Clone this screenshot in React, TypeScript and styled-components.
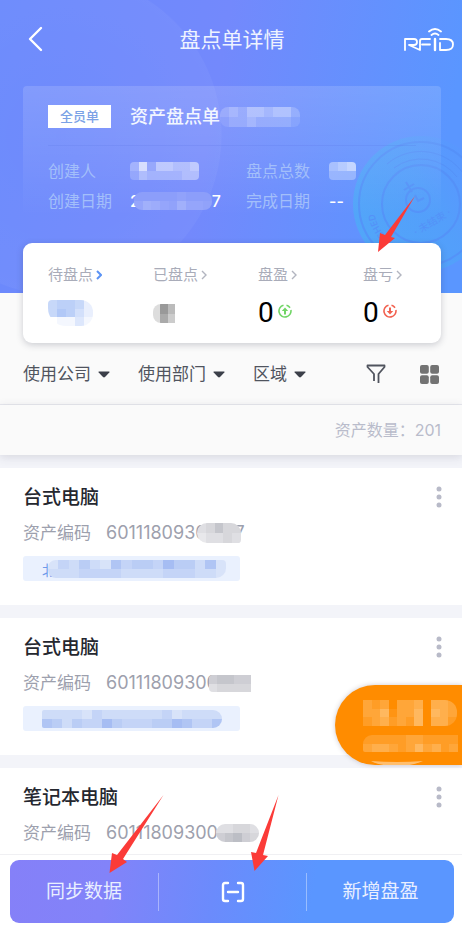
import React from "react";
import styled, { createGlobalStyle, css } from "styled-components";

const GlobalStyle = createGlobalStyle`
  * { box-sizing: border-box; }
  body { margin: 0; background: #fff; }
  body, button, select {
    font-family: Inter, "Noto Sans CJK SC", sans-serif;
  }
  button, select {
    margin: 0;
    padding: 0;
    border: 0;
    background: none;
    color: inherit;
    font-size: inherit;
    cursor: pointer;
  }
  svg { display: block; flex: none; }
  h1, h2, h3, p, dl, dd, dt, ul { margin: 0; padding: 0; }
`;

const Page = styled.div`
  position: relative;
  display: flex;
  flex-direction: column;
  height: 100vh;
  overflow: hidden;
  background: #fafafa;
`;

const Hero = styled.header`
  position: relative;
  flex: none;
  overflow: hidden;
  padding-bottom: 77px;
  color: #fff;
  background:
    radial-gradient(circle at 61px 135px, rgba(255, 255, 255, 0.01) 0, rgba(255, 255, 255, 0.04) 160px, transparent 161px),
    linear-gradient(100deg, #6a89fc 0%, #7389fc 45%, #5a96ff 92%);
`;

const Nav = styled.nav`
  display: grid;
  grid-template-columns: 1fr auto 1fr;
  align-items: center;
  height: 78px;
  margin-bottom: 8px;
  padding: 0 8px 0 28px;
`;

const NavButton = styled.button<{ $end?: boolean }>`
  justify-self: ${(p) => (p.$end ? "end" : "start")};
`;

const PageTitle = styled.h1`
  padding: 2px 18px 0 0;
  color: #eef3ff;
  font-size: 21px;
  line-height: 30px;
  font-weight: 400;
`;

const Sheet = styled.section`
  position: relative;
  margin: 0 21px 0 23px;
  padding: 0 25px;
  border-radius: 4px 4px 0 0;
  background: linear-gradient(180deg, rgba(255, 255, 255, 0.14), rgba(255, 255, 255, 0.08) 50%, transparent);
`;

const SheetHead = styled.div`
  display: flex;
  align-items: center;
  height: 60px;
  padding-top: 2px;
  border-bottom: 1px solid rgba(80, 105, 225, 0.16);
`;

const Badge = styled.span`
  width: 63px;
  margin-right: 19px;
  background: #fff;
  color: #7ba2e6;
  font-size: 13px;
  line-height: 23px;
  font-weight: 500;
  text-align: center;
`;

const SheetTitle = styled.h2`
  font-size: 18px;
  line-height: 28px;
  font-weight: 500;
  color: #f2f6ff;
`;

const Facts = styled.dl`
  display: grid;
  grid-template-columns: 82px 4fr 83px 3fr;
  grid-auto-rows: 30px;
  align-items: center;
  padding-top: 10px;
  font-size: 16px;
  line-height: 24px;

  dt { color: #a3bffa; font-weight: 400; }
  dd { display: flex; align-items: center; font-weight: 500; }
`;

const StampArt = styled.svg`
  position: absolute;
  top: 134px;
  right: -29px;
`;

const MosaicArt = styled.svg<{ $radius?: string; $pull?: number; $plate?: string }>`
  position: relative;
  border-radius: ${(p) => p.$radius ?? "4px"};
  margin-left: ${(p) => p.$pull ?? 0}px;
  background: ${(p) => p.$plate ?? "transparent"};
`;

const StatCard = styled.section`
  position: relative;
  z-index: 2;
  flex: none;
  display: grid;
  grid-template-columns: repeat(3, 1fr) 78px;
  height: 100px;
  margin: -50px 21px 0 23px;
  padding: 18px 0 0 25px;
  border-radius: 9px;
  background: #fff;
  box-shadow: 0 2px 7px rgba(40, 45, 70, 0.22);
`;

const Stat = styled.button`
  display: flex;
  flex-direction: column;
  align-items: flex-start;
`;

const StatLabel = styled.span`
  display: flex;
  align-items: center;
  gap: 3px;
  height: 28px;
  color: #a9acb9;
  font-size: 15px;
  line-height: 28px;
`;

const StatValue = styled.span`
  display: flex;
  align-items: center;
  gap: 4px;
  height: 48px;
  color: #000;
  font-family: Roboto, sans-serif;
  font-size: 28px;
  line-height: 48px;
`;

const TrendMark = styled.span`
  padding-bottom: 5px;
`;

const FilterBar = styled.div`
  flex: none;
  display: flex;
  align-items: center;
  gap: 28px;
  height: 62px;
  padding: 1px 23px 0;
  border-bottom: 1px solid #e7e8ee;
  color: #50545e;
`;

const FilterLabel = styled.label`
  display: flex;
  align-items: center;
  gap: 7px;
`;

const FilterSelect = styled.select`
  appearance: none;
  font-size: 17px;
  line-height: 26px;
`;

const FilterTools = styled.div`
  display: flex;
  align-items: center;
  gap: 34px;
  margin-left: auto;
`;

const CountBar = styled.p`
  position: relative;
  z-index: 1;
  flex: none;
  padding: 0 21px;
  background: #fafafa;
  box-shadow: 0 2px 9px rgba(60, 65, 90, 0.16);
  color: #b9bccb;
  font-size: 16px;
  line-height: 50px;
  text-align: right;
`;

const AssetList = styled.ul`
  flex: 1;
  min-height: 0;
  overflow: hidden;
  background: #f3f4f9;
  list-style: none;
`;

const AssetItem = styled.li`
  display: flex;
  justify-content: space-between;
  align-items: flex-start;
  margin-top: 13px;
  padding: 15px 20px 24px 23px;
  background: #fff;
`;

const AssetName = styled.h3`
  margin-bottom: 6px;
  color: #25272f;
  font-size: 19px;
  line-height: 30px;
  font-weight: 500;
`;

const AssetCode = styled.p`
  display: flex;
  align-items: center;
  height: 28px;
  color: #9da0ad;
  font-size: 18px;
  line-height: 28px;
`;

const CodeLabel = styled.span`
  margin-right: 15px;
  font-size: 17px;
`;

const CodeTail = styled.span`
  margin-left: -6px;
`;

const Tag = styled.div`
  display: flex;
  align-items: center;
  width: 217px;
  height: 25px;
  margin-top: 9px;
  padding-left: 19px;
  border-radius: 3px;
  background: #eaf1fe;
  color: #6f9bea;
  font-size: 14px;
`;

const MoreButton = styled.button`
  display: flex;
  padding-top: 3px;
`;

const Bubble = styled.button`
  position: absolute;
  z-index: 3;
  right: 0;
  bottom: 168px;
  display: flex;
  flex-direction: column;
  align-items: flex-start;
  gap: 9px;
  width: 127px;
  height: 80px;
  padding: 15px 0 0 28px;
  overflow: hidden;
  border-radius: 40px 0 0 40px;
  background: #ff8c00;
  box-shadow: 0 0 5px rgba(60, 40, 60, 0.25);
`;

const Footer = styled.footer`
  position: relative;
  z-index: 4;
  flex: none;
  padding: 5px 8px 10px 10px;
  border-top: 1px solid #f0f0f3;
  background: #fff;
`;

const ActionBar = styled.div`
  display: grid;
  grid-template-columns: repeat(3, 1fr);
  align-items: center;
  height: 63px;
  border-radius: 9px;
  background: linear-gradient(100deg, #8580f8 0%, #8283f9 22%, #6b8bfc 46%, #5a96ff 68%);
  color: #e9effF;
`;

const Action = styled.button<{ $divided?: boolean }>`
  display: flex;
  align-items: center;
  justify-content: center;
  height: 38px;
  padding-top: 1px;
  font-size: 19px;
  line-height: 28px;
  font-weight: 400;
  ${(p) =>
    p.$divided &&
    css`
      border-left: 1px solid rgba(255, 255, 255, 0.38);
    `}
`;

const Pointer = styled.svg<{ $left: string; $top: number }>`
  position: absolute;
  left: ${(p) => p.$left};
  top: ${(p) => p.$top}px;
  pointer-events: none;
`;

type MosaicProps = {
  rows: string[];
  width: number;
  height: number;
  color?: string;
  plate?: string;
  radius?: string;
  pull?: number;
};

/* Each digit is the strength of one block, in tenths. */
function Mosaic({ rows, width, height, color = "#fff", plate, radius, pull }: MosaicProps) {
  const cols = rows[0].length;
  return (
    <MosaicArt
      width={width}
      height={height}
      viewBox={`0 0 ${cols} ${rows.length}`}
      preserveAspectRatio="none"
      shapeRendering="crispEdges"
      aria-hidden
      $radius={radius}
      $pull={pull}
      $plate={plate}
    >
      {rows.flatMap((row, y) =>
        [...row].map((d, x) => (
          <rect key={`${x}-${y}`} x={x} y={y} width="1" height="1" fill={color} opacity={Number(d) / 10} />
        ))
      )}
    </MosaicArt>
  );
}

const Stamp = () => (
  <StampArt width="140" height="140" viewBox="-70 -70 140 140" fill="none" aria-hidden>
    <defs>
      <linearGradient id="stampFill" x1="0" y1="0.6" x2="0.8" y2="0.1">
        <stop offset="0" stopColor="#4fa9f8" stopOpacity=".85" />
        <stop offset=".6" stopColor="#4fa4f8" stopOpacity=".6" />
        <stop offset="1" stopColor="#559cfc" stopOpacity=".2" />
      </linearGradient>
    </defs>
    <circle r="68" fill="url(#stampFill)" />
    <g stroke="#5590f8" opacity=".8">
      <circle r="62" strokeWidth="2" />
      <circle r="39" strokeWidth="2" />
      <path d="M-34 -40 A52 52 0 0 1 42 -31" />
      <path d="M-27 -36 A45 45 0 0 1 36 -27" />
      <circle cx="-3" cy="-4" r="12" strokeWidth="2" />
      <path d="M-6 -9 L-3 -3 L3 -6" strokeWidth="2" />
      <path d="M-17 -14 L-7 -20 M-12 -17 L-15 -22 M-12 -17 L-9 -12" strokeWidth="2" />
    </g>
    <path id="stampArc" d="M-10 47 A48 48 0 0 1 -30 -37" />
    <g fill="#5590f8" opacity=".9">
      <text fontSize="9" fontWeight="500">
        <textPath href="#stampArc">UNFINISHED</textPath>
      </text>
      <text transform="translate(13 21) rotate(-31)" textAnchor="middle" fontSize="10">
        · 未结束 ·
      </text>
    </g>
  </StampArt>
);

const BackIcon = () => (
  <svg width="15" height="26" viewBox="0 0 15 26" fill="none" stroke="#fff" strokeWidth="2.400" strokeLinecap="round" strokeLinejoin="round" aria-hidden>
    <path d="M13 2 L2 13 L13 24" />
  </svg>
);

const RfidIcon = () => (
  <svg width="51" height="25" viewBox="0 0 51 25" fill="none" stroke="#fff" strokeWidth="1.800" strokeLinecap="round" strokeLinejoin="round" aria-hidden>
    <path d="M2 23 V12 H11 Q14 12 14 15 Q14 18 11 18 H6 L17 23 V14 Q17 12 19 12 H27 M19 17.500 H27" />
    <path d="M32 12 V23" strokeWidth="2.400" />
    <path d="M37 16 V23 H43 Q50 23 50 17.500 Q50 12 43 12 H37" />
    <path d="M26 4.500 Q32 -.5 38 4.500 M28.500 8 Q32 5 35.500 8" />
  </svg>
);

const Chevron = ({ active }: { active?: boolean }) => (
  <svg width="6" height="10" viewBox="0 0 6 10" fill="none" stroke={active ? "#5b93f5" : "#b2b5c0"} strokeWidth={active ? 2 : 1.4} aria-hidden>
    <path d="M1 1 L5 5 L1 9" />
  </svg>
);

const TrendIcon = ({ down }: { down?: boolean }) => (
  <svg width="14" height="14" viewBox="0 0 14 14" fill="none" stroke={down ? "#f2604f" : "#70d565"} strokeWidth="1.600" aria-hidden>
    <path d="M5.500 1.200 A6 6 0 1 0 12.900 6" />
    <path d="M8.500 1.200 A6 6 0 0 1 12 3.700" />
    {down ? (
      <>
        <path d="M7 3.500 V8" strokeWidth="2" />
        <path d="M3.800 7 H10.200 L7 10.600 Z" fill="#f2604f" stroke="none" />
      </>
    ) : (
      <>
        <path d="M7 10.500 V6" strokeWidth="2" />
        <path d="M3.800 7 H10.200 L7 3.400 Z" fill="#70d565" stroke="none" />
      </>
    )}
  </svg>
);

const Caret = () => (
  <svg width="12" height="7" viewBox="0 0 12 7" aria-hidden>
    <path d="M1 .5 H11 Q12 .7 11.300 1.500 L7 6 Q6 6.800 5 6 L.7 1.500 Q0 .7 1 .5 Z" fill="#3b3f49" />
  </svg>
);

const FunnelIcon = () => (
  <svg width="20" height="20" viewBox="0 0 20 20" fill="none" stroke="#50545e" strokeWidth="1.800" strokeLinejoin="round" aria-hidden>
    <path d="M8 17 V10 L1.500 3 V1.500 H18.500 V3 L12.500 10 V19" />
  </svg>
);

const GridIcon = () => (
  <svg width="19" height="19" viewBox="0 0 19 19" fill="#737373" aria-hidden>
    <rect width="8.800" height="8.800" rx="2" />
    <rect x="10.200" width="8.800" height="8.800" rx="2" />
    <rect y="10.200" width="8.800" height="8.800" rx="2" />
    <rect x="10.200" y="10.200" width="8.800" height="8.800" rx="2" />
  </svg>
);

const DotsIcon = () => (
  <svg width="6" height="22" viewBox="0 0 6 22" fill="#b8bac8" aria-hidden>
    <circle cx="3" cy="3" r="2.500" />
    <circle cx="3" cy="11" r="2.500" />
    <circle cx="3" cy="19" r="2.500" />
  </svg>
);

const ScanIcon = () => (
  <svg width="24" height="22" viewBox="0 0 24 22" fill="none" stroke="#fff" strokeWidth="2.400" strokeLinecap="round" strokeLinejoin="round" aria-hidden>
    <path d="M7 2 H4 Q2 2 2 4 V18 Q2 20 4 20 H7 M17 2 H20 Q22 2 22 4 V18 Q22 20 20 20 H17 M7 11 H17" />
  </svg>
);

const GREY = "#9a9ca6";
const BLUE = "#7d9fee";

const filters = ["使用公司", "使用部门", "区域"];

const assets = [
  {
    name: "台式电脑",
    code: "6011180930",
    cover: <Mosaic rows={["23533", "12232"]} width={44} height={20} color={GREY} plate="#f1f1f3" radius="12px 12px 4px 12px" pull={-10} />,
    tail: "7",
    tagText: "北",
    tag: <Mosaic rows={["13242153443644251", "22233332222333221"]} width={178} height={18} color={BLUE} plate="#e3ebfb" radius="8px 4px 10px 8px" pull={-8} />,
  },
  {
    name: "台式电脑",
    code: "60111809300",
    cover: <Mosaic rows={["45544", "23333"]} width={42} height={17} color={GREY} plate="#f1f1f3" radius="4px 0 0 4px" pull={-9} />,
    tag: <Mosaic rows={["222213222222312222", "542433643334465335"]} width={180} height={18} color={BLUE} plate="#e3ebfb" radius="2px 9px 9px 2px" />,
  },
  {
    name: "笔记本电脑",
    code: "60111809300",
    cover: <Mosaic rows={["22332", "45643"]} width={43} height={18} color={GREY} plate="#f1f1f3" radius="9px" pull={-2} />,
    tag: <Mosaic rows={["222213222222312222", "542433643334465335"]} width={180} height={18} color={BLUE} />,
  },
];

export default function App() {
  return (
    <Page>
      <GlobalStyle />
      <Hero>
        <Stamp />
        <Nav>
          <NavButton aria-label="返回">
            <BackIcon />
          </NavButton>
          <PageTitle>盘点单详情</PageTitle>
          <NavButton aria-label="RFID" $end>
            <RfidIcon />
          </NavButton>
        </Nav>
        <Sheet>
          <SheetHead>
            <Badge>全员单</Badge>
            <SheetTitle>资产盘点单</SheetTitle>
            <Mosaic rows={["232443442", "122322221"]} width={80} height={20} radius="8px 8px 6px 8px" />
          </SheetHead>
          <Facts>
            <dt>创建人</dt>
            <dd>
              <Mosaic rows={["37255445", "24333344"]} width={69} height={18} />
            </dd>
            <dt>盘点总数</dt>
            <dd>
              <Mosaic rows={["456", "333"]} width={27} height={18} />
            </dd>
            <dt>创建日期</dt>
            <dd>
              2<Mosaic rows={["333334333", "587548554"]} width={78} height={18} color="#a9b6fb" plate="#8094fa" radius="8px" pull={-6} />7
            </dd>
            <dt>完成日期</dt>
            <dd>--</dd>
          </Facts>
        </Sheet>
      </Hero>

      <StatCard>
        <Stat>
          <StatLabel>
            待盘点
            <Chevron active />
          </StatLabel>
          <StatValue>
            <Mosaic rows={["56652", "57642", "01131"]} width={45} height={26} color="#90b1f4" radius="4px 12px 12px 18px" />
          </StatValue>
        </Stat>
        <Stat>
          <StatLabel>
            已盘点
            <Chevron />
          </StatLabel>
          <StatValue>
            <Mosaic rows={["264", "253"]} width={22} height={19} color="#555" radius="8px 0 0 8px" />
          </StatValue>
        </Stat>
        <Stat>
          <StatLabel>
            盘盈
            <Chevron />
          </StatLabel>
          <StatValue>
            0
            <TrendMark>
              <TrendIcon />
            </TrendMark>
          </StatValue>
        </Stat>
        <Stat>
          <StatLabel>
            盘亏
            <Chevron />
          </StatLabel>
          <StatValue>
            0
            <TrendMark>
              <TrendIcon down />
            </TrendMark>
          </StatValue>
        </Stat>
        <Pointer $left="calc(100% - 64px)" $top={-48} width="40" height="60" viewBox="0 0 40 60" aria-hidden>
          <path d="M38 1 L14 42 L18 43 L1 57 L3 38 L8 40 Z" fill="#fb3b38" />
        </Pointer>
      </StatCard>

      <FilterBar>
        {filters.map((name) => (
          <FilterLabel key={name}>
            <FilterSelect aria-label={name}>
              <option>{name}</option>
            </FilterSelect>
            <Caret />
          </FilterLabel>
        ))}
        <FilterTools>
          <button aria-label="筛选">
            <FunnelIcon />
          </button>
          <button aria-label="视图">
            <GridIcon />
          </button>
        </FilterTools>
      </FilterBar>
      <CountBar>资产数量：201</CountBar>

      <AssetList>
        {assets.map((asset, i) => (
          <AssetItem key={i}>
            <div>
              <AssetName>{asset.name}</AssetName>
              <AssetCode>
                <CodeLabel>资产编码</CodeLabel>
                {asset.code}
                {asset.cover}
                {asset.tail && <CodeTail>{asset.tail}</CodeTail>}
              </AssetCode>
              <Tag>
                {asset.tagText}
                {asset.tag}
              </Tag>
            </div>
            <MoreButton aria-label="更多">
              <DotsIcon />
            </MoreButton>
          </AssetItem>
        ))}
      </AssetList>

      <Bubble aria-label="悬浮入口">
        <Mosaic rows={["32303340443", "33513350543", "23423250442"]} width={94} height={26} color="#ffe3bd" radius="0 12px 12px 0" />
        <Mosaic rows={["22222332222", "34432353423"]} width={95} height={17} color="#ffe3bd" radius="9px 0 0 2px" />
        <svg width="66" height="5" viewBox="0 0 66 5" aria-hidden>
          <path d="M8 0 Q34 2 60 0 Q48 5 36 5 Q16 5 8 0 Z" fill="#ffbe6e" />
        </svg>
      </Bubble>

      <Footer>
        <ActionBar>
          <Action>同步数据</Action>
          <Action $divided aria-label="扫描">
            <ScanIcon />
          </Action>
          <Action $divided>新增盘盈</Action>
        </ActionBar>
        <Pointer $left="calc(50% - 122px)" $top={-61} width="56" height="82" viewBox="0 0 56 82" aria-hidden>
          <path d="M54.500 1 L14 65 L18 68 L.5 79 L3 59 L8 61 Z" fill="#fb3b38" />
        </Pointer>
        <Pointer $left="calc(50% + 20px)" $top={-60} width="30" height="80" viewBox="0 0 30 80" aria-hidden>
          <path d="M27.500 0 L12 60 L17 61 L3.500 76 L0 57 L5 58 Z" fill="#fb3b38" />
        </Pointer>
      </Footer>
    </Page>
  );
}
